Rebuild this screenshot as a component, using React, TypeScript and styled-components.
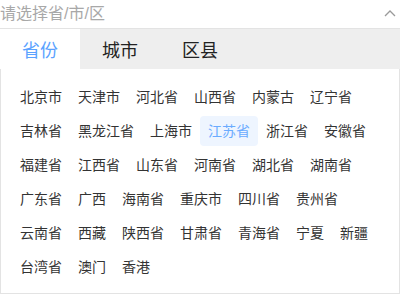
import React, { useState } from 'react';
import styled, { createGlobalStyle } from 'styled-components';

const GlobalStyle = createGlobalStyle`
    html, body {
        margin: 0;
        padding: 0;
        background: #fff;
    }
    body {
        font-family: "Liberation Sans", "Noto Sans CJK SC", sans-serif;
    }
`;

const Picker = styled.div`
    width: 400px;
`;

const InputRow = styled.div`
    display: flex;
    align-items: center;
    justify-content: space-between;
    height: 29px;
    border-bottom: 1px solid #e3e3e3;
    box-sizing: border-box;
`;

const Placeholder = styled.span`
    font-size: 16px;
    color: #a8a8a8;
    line-height: 26px;
`;

const Arrow = styled.svg`
    width: 12px;
    height: 8px;
    margin-right: 4px;
    margin-bottom: 2px;
`;

const TabBar = styled.div`
    display: flex;
    height: 40px;
    background: #eeeeee;
`;

const Tab = styled.div<{ $active?: boolean }>`
    width: 80px;
    display: flex;
    align-items: center;
    justify-content: center;
    font-size: 18px;
    color: ${p => (p.$active ? '#5ba2ff' : '#222')};
    background: ${p => (p.$active ? '#fff' : 'transparent')};
    cursor: pointer;
`;

const Panel = styled.div`
    display: flex;
    flex-wrap: wrap;
    align-content: flex-start;
    padding: 11px 11px 9px;
    border: 1px solid #e3e3e3;
    border-top: none;
`;

const Item = styled.div<{ $selected?: boolean }>`
    height: 30px;
    line-height: 30px;
    margin: 2px 0;
    padding: 0 8px;
    font-size: 14px;
    border-radius: 4px;
    color: ${p => (p.$selected ? '#6aabff' : '#333')};
    background: ${p => (p.$selected ? '#eef5ff' : 'transparent')};
    cursor: pointer;
`;

const provinces = [
    '北京市', '天津市', '河北省', '山西省', '内蒙古', '辽宁省',
    '吉林省', '黑龙江省', '上海市', '江苏省', '浙江省', '安徽省',
    '福建省', '江西省', '山东省', '河南省', '湖北省', '湖南省',
    '广东省', '广西', '海南省', '重庆市', '四川省', '贵州省',
    '云南省', '西藏', '陕西省', '甘肃省', '青海省', '宁夏', '新疆',
    '台湾省', '澳门', '香港',
];

const tabs = ['省份', '城市', '区县'];

const App: React.FC = () => {
    const [tab, setTab] = useState(0);
    const [selected, setSelected] = useState('江苏省');

    return (
        <Picker>
            <GlobalStyle />
            <InputRow>
                <Placeholder>请选择省/市/区</Placeholder>
                <Arrow viewBox="0 0 12 8">
                    <path d="M1 7 L6 2 L11 7" fill="none" stroke="#9a9a9a" strokeWidth="1.3" />
                </Arrow>
            </InputRow>
            <TabBar>
                {tabs.map((t, i) => (
                    <Tab key={t} $active={i === tab} onClick={() => setTab(i)}>
                        {t}
                    </Tab>
                ))}
            </TabBar>
            <Panel>
                {provinces.map(p => (
                    <Item key={p} $selected={p === selected} onClick={() => setSelected(p)}>
                        {p}
                    </Item>
                ))}
            </Panel>
        </Picker>
    );
};

export default App;
